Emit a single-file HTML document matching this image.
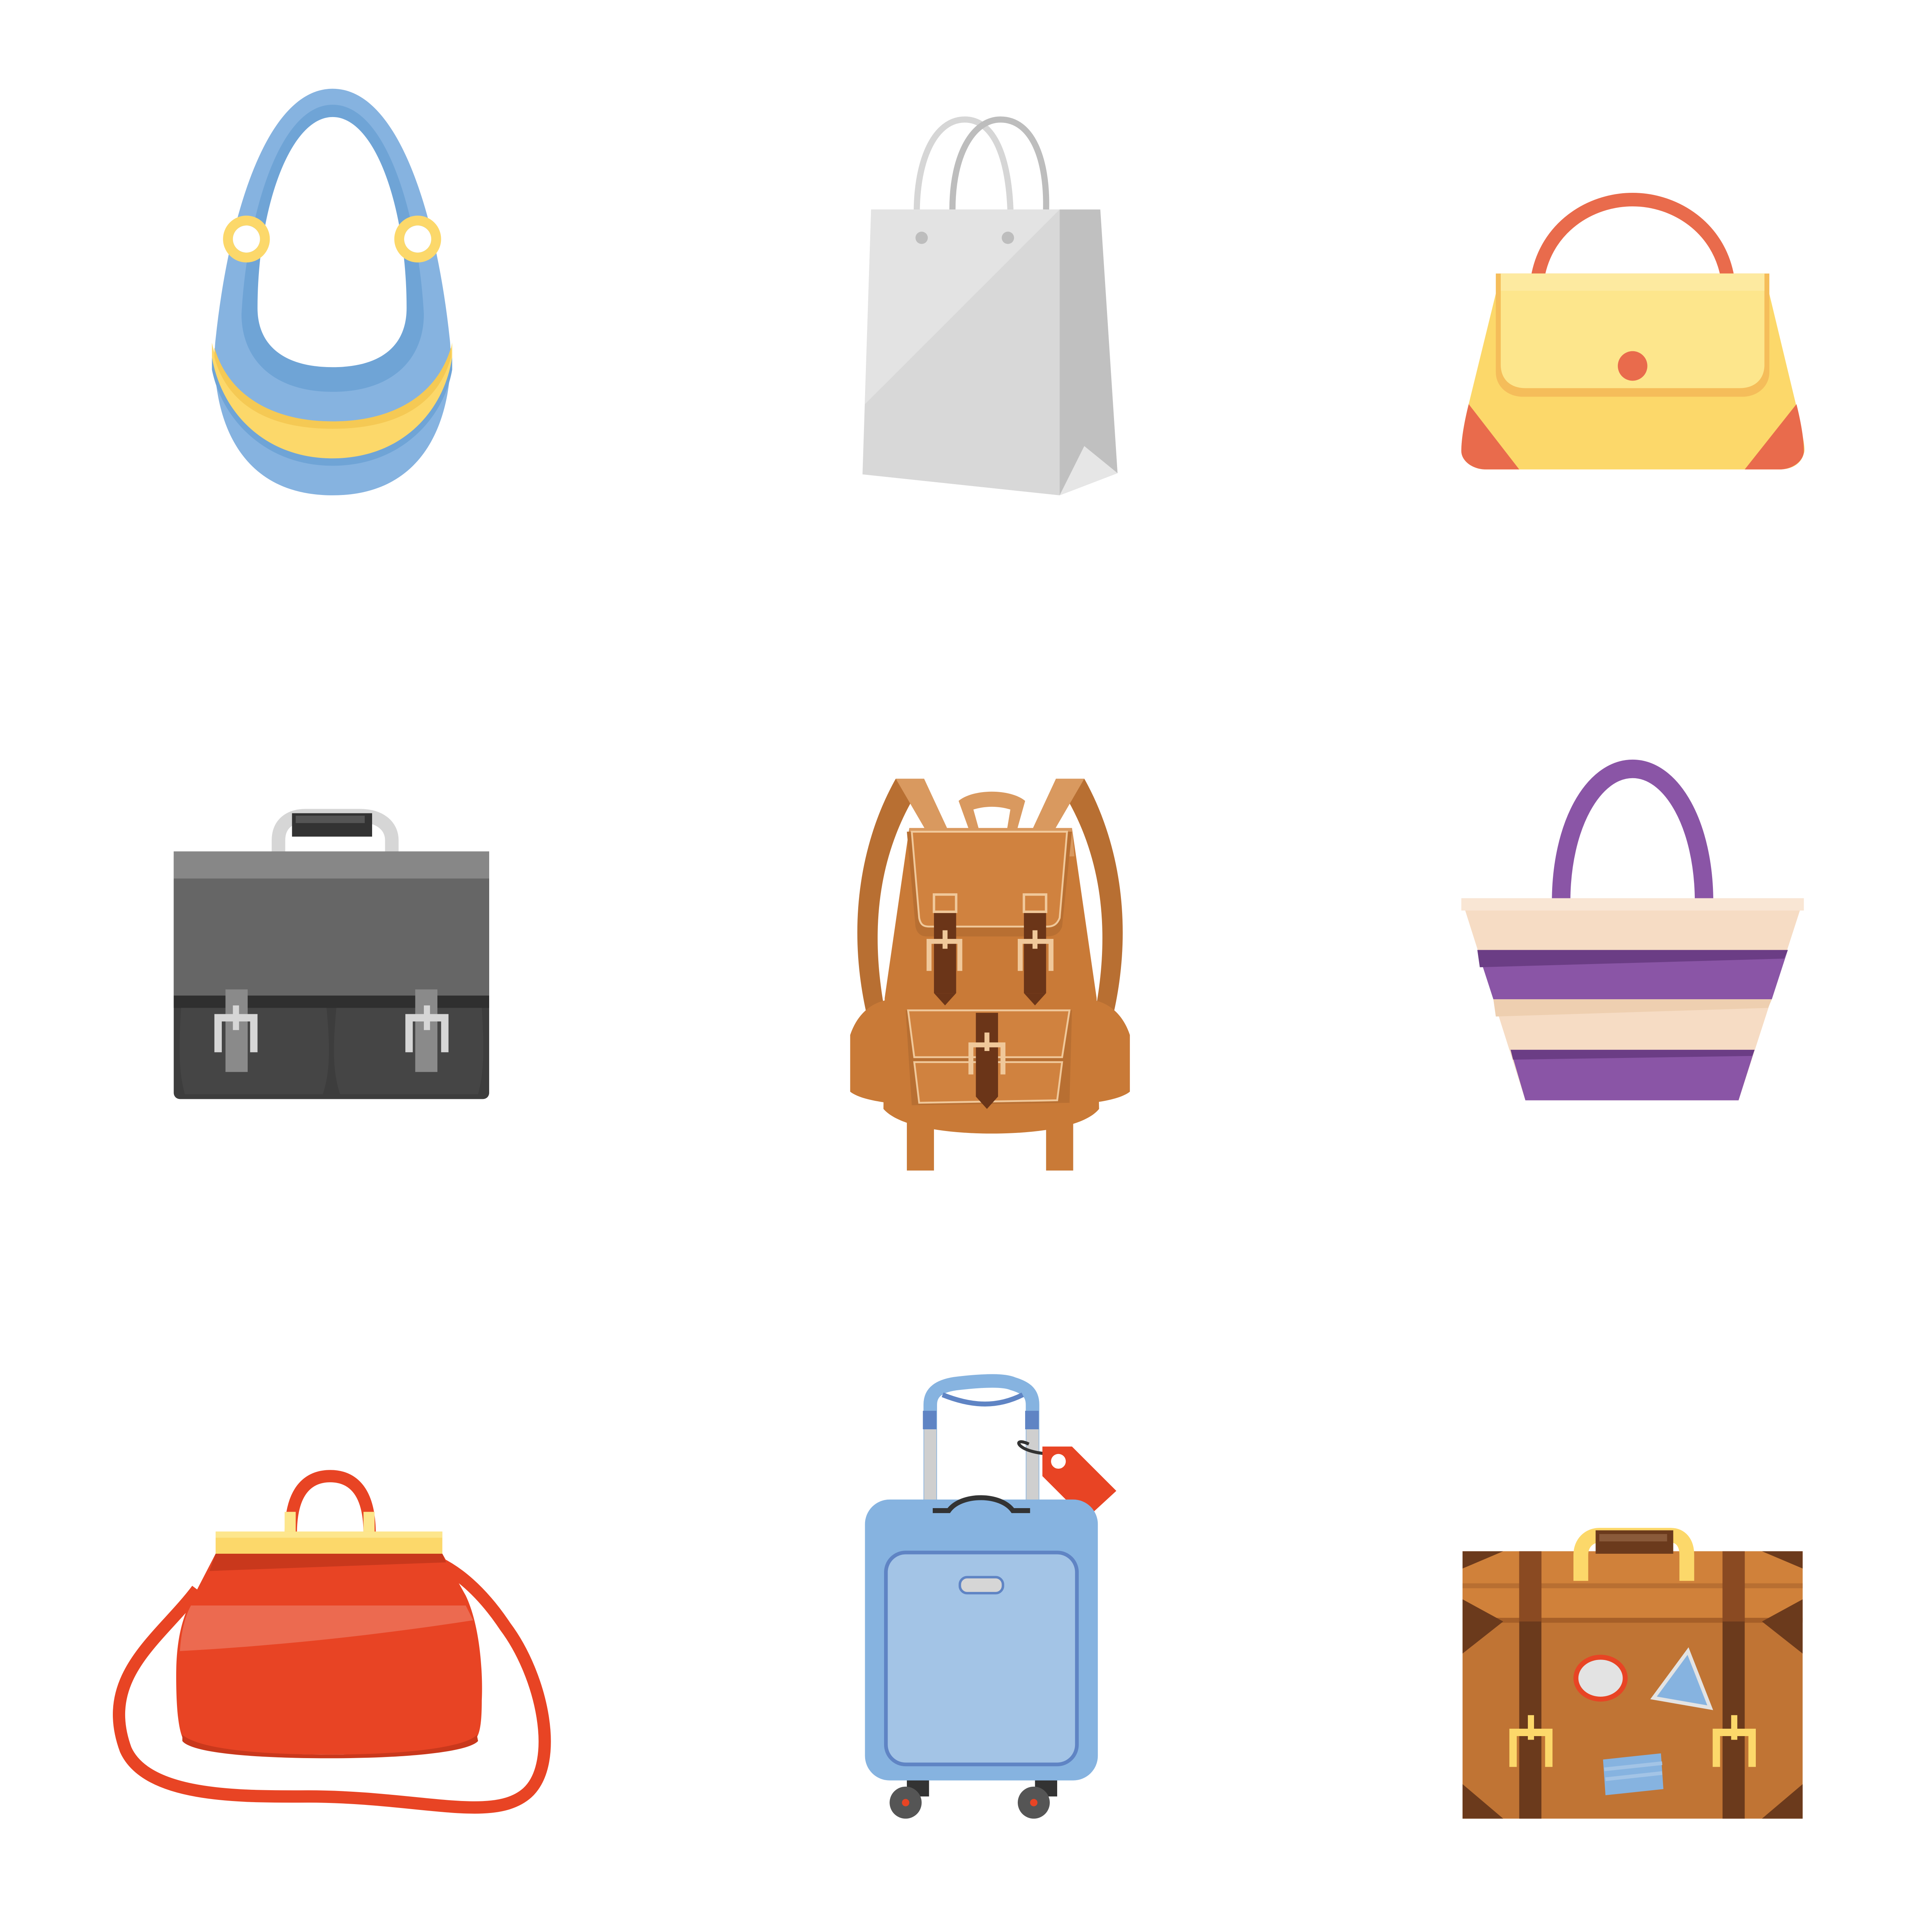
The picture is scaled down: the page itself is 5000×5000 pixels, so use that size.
<!DOCTYPE html>
<html><head><meta charset="utf-8"><style>html,body{margin:0;padding:0;background:#fff}svg{display:block}</style></head>
<body>
<svg width="5000" height="5000" viewBox="0 0 1568 1568" xmlns="http://www.w3.org/2000/svg">
<rect width="1568" height="1568" fill="#fff"/>

<!-- 1 blue hobo bag -->
<path d="M175,275 C185,180 215,72 270,72 C325,72 355,180 365,275 C368,300 367,402 270,402 C172,402 172,300 175,275 Z" fill="#86b3e0"/>
<path d="M172,300 C180,340 215,378 270,378 C325,378 360,340 367,300 L367,290 C360,330 325,372 270,372 C215,372 180,330 172,290 Z" fill="#6fa4d6"/>
<path d="M172,278 C180,320 215,342 270,342 C325,342 360,320 367,278 L367,290 C360,335 325,372 270,372 C215,372 180,335 172,290 Z" fill="#fcd86a"/>
<path d="M174,282 C185,320 220,342 270,342 C320,342 355,320 366,282 L366,290 C355,330 320,348 270,348 C220,348 185,330 174,290Z" fill="#f5c954"/>
<path d="M196,255 C200,180 225,85 270,85 C315,85 340,180 344,255 C344,290 320,318 270,318 C220,318 196,290 196,255Z" fill="#6fa4d6"/>
<path d="M209,250 C209,170 235,95 270,95 C305,95 330,170 330,250 C330,280 310,298 270,298 C230,298 209,280 209,250Z" fill="#fff"/>
<circle cx="200" cy="194" r="15" fill="#86b3e0" stroke="#fcd86a" stroke-width="8"/>
<circle cx="339" cy="194" r="15" fill="#86b3e0" stroke="#fcd86a" stroke-width="8"/>
<circle cx="200" cy="194" r="11" fill="#fff"/>
<circle cx="339" cy="194" r="11" fill="#fff"/>

<!-- 2 shopping bag -->
<path d="M745,192 C740,140 755,97 783,97 C811,97 822,140 820,192" fill="none" stroke="#d6d6d6" stroke-width="5"/>
<path d="M773,170 C773,125 790,97 812,97 C838,97 850,130 849,170" fill="none" stroke="#bdbdbd" stroke-width="5"/>
<polygon points="707,170 860,170 860,402 700,385" fill="#d8d8d8"/>
<polygon points="707,170 860,170 702,328" fill="#e3e3e3"/>
<polygon points="860,170 893,170 907,384 860,402" fill="#c0c0c0"/>
<polygon points="880,362 907,384 860,402" fill="#e6e6e6"/>
<circle cx="748" cy="193" r="5" fill="#bdbdbd"/><circle cx="818" cy="193" r="5" fill="#bdbdbd"/>

<!-- 3 yellow purse -->
<path d="M1248,225 C1255,185 1290,162 1325,162 C1360,162 1395,185 1402,225" fill="none" stroke="#e96b4c" stroke-width="11"/>
<path d="M1218,222 L1432,222 L1458,330 C1462,350 1466,364 1464,368 C1462,376 1455,381 1444,381 L1206,381 C1195,381 1186,374 1186,366 C1186,355 1189,340 1192,328 Z" fill="#fcd86a"/>
<path d="M1192,328 L1233,381 L1206,381 C1195,381 1186,374 1186,366 C1186,355 1189,340 1192,328 Z" fill="#e96b4c"/>
<path d="M1458,328 L1416,381 L1444,381 C1455,381 1464,374 1464,366 C1464,355 1461,340 1458,328 Z" fill="#e96b4c"/>
<path d="M1214,222 L1436,222 L1436,302 C1436,314 1426,322 1414,322 L1236,322 C1224,322 1214,314 1214,302 Z" fill="#f5bd5a"/>
<path d="M1218,222 L1432,222 L1432,296 C1432,308 1424,315 1412,315 L1238,315 C1226,315 1218,308 1218,296 Z" fill="#fde68c"/>
<rect x="1218" y="222" width="214" height="14" fill="#fdeaa0"/>
<circle cx="1325" cy="297" r="12" fill="#e96b4c"/>

<!-- 4 briefcase -->
<path d="M226,700 L226,682 C226,668 236,662 248,662 L292,662 C308,662 318,670 318,682 L318,700" fill="none" stroke="#d6d6d6" stroke-width="11"/>
<rect x="237" y="660" width="65" height="19" fill="#333"/><rect x="240" y="662" width="56" height="6" fill="#555"/>
<rect x="141" y="691" width="256" height="201" rx="5" fill="#3d3d3d"/>
<rect x="141" y="691" width="256" height="120" fill="#666"/>
<rect x="141" y="691" width="256" height="22" fill="#878787"/>
<rect x="141" y="808" width="256" height="10" fill="#2f2f2f"/>
<path d="M147,818 L265,818 C268,850 268,870 262,888 L150,888 C145,870 145,850 147,818Z" fill="#454545"/>
<path d="M273,818 L391,818 C393,850 393,870 388,888 L276,888 C270,870 270,850 273,818Z" fill="#454545"/>
<rect x="183" y="803" width="18" height="67" fill="#8a8a8a"/><rect x="337" y="803" width="18" height="67" fill="#8a8a8a"/>
<path d="M177,854 L177,826 L206,826 L206,854" fill="none" stroke="#d6d6d6" stroke-width="6"/>
<path d="M332,854 L332,826 L361,826 L361,854" fill="none" stroke="#d6d6d6" stroke-width="6"/>
<rect x="189" y="816" width="5" height="20" fill="#d6d6d6"/><rect x="344" y="816" width="5" height="20" fill="#d6d6d6"/>

<!-- 5 backpack -->
<path d="M727,632 C700,680 685,750 705,830 L720,830 C705,760 712,700 740,650Z" fill="#b86f32"/>
<path d="M880,632 C907,680 922,750 902,830 L887,830 C902,760 895,700 867,650Z" fill="#b86f32"/>
<rect x="736" y="910" width="22" height="40" fill="#c97a37"/><rect x="849" y="910" width="22" height="40" fill="#c97a37"/>
<path d="M778,650 C790,640 820,640 832,650 L825,675 L817,675 L820,657 C810,654 800,654 790,657 L795,675 L787,675Z" fill="#d9995f"/>
<path d="M738,672 L870,672 L890,810 L892,900 C880,915 840,920 805,920 C770,920 730,915 717,900 L718,810 Z" fill="#c97a37"/>
<path d="M738,672 L870,672 L872,695 L738,697Z" fill="#d9995f"/>
<path d="M727,632 L750,632 L770,675 L752,675Z M880,632 L857,632 L837,675 L855,675Z" fill="#d9995f"/>
<path d="M736,675 L870,675 L862,752 C860,758 855,760 850,760 L752,760 C747,760 744,757 743,752Z" fill="#b86f32"/>
<path d="M740,675 L866,675 L860,745 C858,750 855,752 850,752 L754,752 C749,752 747,750 746,745Z" fill="#d0823f" stroke="#f0c89a" stroke-width="1.5"/>
<path d="M735,820 L870,820 L868,895 L740,897Z" fill="#b86f32"/>
<path d="M737,820 L868,820 L862,858 L742,858Z" fill="#d0823f" stroke="#f0c89a" stroke-width="1.5"/>
<path d="M742,862 L862,862 L858,893 L746,895Z" fill="#d0823f" stroke="#f0c89a" stroke-width="1.5"/>
<path d="M690,840 C695,825 705,815 718,812 L720,895 C705,893 695,890 690,886Z" fill="#c97a37"/>
<path d="M917,840 C912,825 902,815 889,812 L887,895 C902,893 912,890 917,886Z" fill="#c97a37"/>
<rect x="758" y="741" width="18" height="65" fill="#6b3518"/><polygon points="758,806 776,806 767,816" fill="#6b3518"/>
<rect x="831" y="741" width="18" height="65" fill="#6b3518"/><polygon points="831,806 849,806 840,816" fill="#6b3518"/>
<rect x="792" y="822" width="18" height="68" fill="#6b3518"/><polygon points="792,890 810,890 801,900" fill="#6b3518"/>
<rect x="758" y="726" width="18" height="14" fill="none" stroke="#f0c89a" stroke-width="2"/>
<rect x="831" y="726" width="18" height="14" fill="none" stroke="#f0c89a" stroke-width="2"/>
<path d="M754,788 L754,764 L779,764 L779,788 M828,788 L828,764 L853,764 L853,788 M788,872 L788,848 L814,848 L814,872" fill="none" stroke="#f0c89a" stroke-width="4"/>
<rect x="765" y="755" width="4" height="15" fill="#f0c89a"/><rect x="838" y="755" width="4" height="15" fill="#f0c89a"/><rect x="799" y="838" width="4" height="15" fill="#f0c89a"/>

<!-- 6 purple tote -->
<path d="M1267,732 C1267,670 1293,624 1325,624 C1357,624 1383,670 1383,732" fill="none" stroke="#8a55a6" stroke-width="15"/>
<polygon points="1186,729 1464,729 1411,893 1238,893" fill="#f6dcc4"/>
<rect x="1186" y="729" width="278" height="10" fill="#f9e6d4"/>
<polygon points="1199,771 1451,771 1438,811 1212,811" fill="#8a55a6"/>
<polygon points="1199,771 1451,771 1448,778 1201,785" fill="#6b3d85"/>
<polygon points="1212,811 1438,811 1435,818 1214,825" fill="#eecfb0"/>
<polygon points="1226,852 1424,852 1411,893 1238,893" fill="#8a55a6"/>
<polygon points="1226,852 1424,852 1422,857 1228,860" fill="#6b3d85"/>

<!-- 7 red bag -->
<path d="M160,1290 C130,1330 80,1360 102,1420 C120,1460 200,1458 250,1458 C340,1458 400,1480 428,1455 C455,1430 440,1360 410,1320 C390,1290 370,1275 355,1268" fill="none" stroke="#e84424" stroke-width="10"/>
<path d="M236,1245 C236,1210 250,1198 268,1198 C286,1198 300,1210 300,1245" fill="none" stroke="#e84424" stroke-width="10"/>
<rect x="231" y="1227" width="9" height="18" fill="#fde68c"/><rect x="295" y="1227" width="9" height="18" fill="#fde68c"/>
<rect x="175" y="1243" width="184" height="18" fill="#fcd86a"/><rect x="175" y="1243" width="184" height="5" fill="#fde68c"/>
<path d="M175,1261 L359,1261 L378,1295 C390,1320 392,1360 391,1380 C391,1395 390,1405 387,1410 C380,1420 330,1424 268,1424 C200,1424 155,1420 148,1410 C144,1400 143,1380 143,1360 C143,1330 148,1310 160,1290 Z" fill="#e84424"/>
<path d="M175,1261 L359,1261 L362,1268 L170,1275Z" fill="#c9381c"/>
<path d="M155,1303 L378,1303 L384,1315 C300,1328 220,1336 146,1340 C147,1325 150,1312 155,1303Z" fill="#ec6a50"/>
<path d="M148,1408 C160,1418 200,1424 268,1424 C330,1424 378,1418 387,1408 L388,1413 C380,1422 330,1427 268,1427 C200,1427 155,1422 148,1413Z" fill="#c9381c"/>

<!-- 8 blue trolley -->
<path d="M755,1225 L755,1140 C755,1130 762,1125 775,1123 C800,1120 815,1120 822,1123 C832,1126 838,1130 838,1140 L838,1225" fill="none" stroke="#86b3e0" stroke-width="11"/>
<rect x="750" y="1160" width="10" height="65" fill="#cfcfcf"/><rect x="833" y="1160" width="10" height="65" fill="#cfcfcf"/>
<rect x="749" y="1145" width="11" height="15" fill="#5f84c4"/><rect x="832" y="1145" width="11" height="15" fill="#5f84c4"/>
<path d="M765,1132 C790,1142 810,1142 830,1132" fill="none" stroke="#5f84c4" stroke-width="4"/>
<path d="M835,1172 C820,1165 825,1180 855,1180" fill="none" stroke="#333" stroke-width="2.5"/>
<polygon points="846,1174 870,1174 906,1210 881,1233 846,1198" fill="#e84424"/>
<circle cx="859" cy="1186" r="6" fill="#fff"/>
<rect x="736" y="1440" width="18" height="18" fill="#333"/><rect x="840" y="1440" width="18" height="18" fill="#333"/>
<circle cx="735" cy="1463" r="13" fill="#555"/><circle cx="735" cy="1463" r="3" fill="#e84424"/>
<circle cx="839" cy="1463" r="13" fill="#555"/><circle cx="839" cy="1463" r="3" fill="#e84424"/>
<rect x="702" y="1217" width="189" height="228" rx="20" fill="#86b3e0"/>
<path d="M757,1226 L770,1226 C780,1212 812,1212 822,1226 L836,1226" fill="none" stroke="#333" stroke-width="4"/>
<rect x="719" y="1260" width="155" height="172" rx="16" fill="#a3c4e6" stroke="#5f84c4" stroke-width="3"/>
<rect x="779" y="1280" width="35" height="13" rx="6" fill="#d6d6d6" stroke="#5f84c4" stroke-width="2"/>

<!-- 9 brown suitcase -->
<rect x="1187" y="1259" width="276" height="217" fill="#c07434"/>
<rect x="1187" y="1259" width="276" height="57" fill="#d0813a"/>
<rect x="1187" y="1285" width="276" height="4" fill="#b86f32"/>
<rect x="1187" y="1313" width="276" height="4" fill="#a65f28"/>
<polygon points="1187,1259 1220,1259 1187,1273" fill="#6b3a1c"/><polygon points="1463,1259 1430,1259 1463,1273" fill="#6b3a1c"/>
<polygon points="1187,1298 1220,1316 1187,1342" fill="#6b3a1c"/><polygon points="1463,1298 1430,1316 1463,1342" fill="#6b3a1c"/>
<polygon points="1187,1448 1220,1476 1187,1476" fill="#6b3a1c"/><polygon points="1463,1448 1430,1476 1463,1476" fill="#6b3a1c"/>
<rect x="1233" y="1259" width="18" height="217" fill="#6b3a1c"/><rect x="1398" y="1259" width="18" height="217" fill="#6b3a1c"/>
<rect x="1233" y="1259" width="18" height="57" fill="#8a4a22"/><rect x="1398" y="1259" width="18" height="57" fill="#8a4a22"/>
<path d="M1283,1283 L1283,1262 C1283,1252 1290,1246 1298,1246 L1356,1246 C1364,1246 1369,1252 1369,1262 L1369,1283" fill="none" stroke="#fcd86a" stroke-width="12"/>
<rect x="1295" y="1242" width="63" height="19" fill="#6b3a1c"/><rect x="1298" y="1245" width="55" height="6" fill="#8a5a3a"/>
<path d="M1228,1434 L1228,1406 L1257,1406 L1257,1434 M1393,1434 L1393,1406 L1422,1406 L1422,1434" fill="none" stroke="#fcd86a" stroke-width="6"/>
<rect x="1240" y="1392" width="5" height="20" fill="#fcd86a"/><rect x="1405" y="1392" width="5" height="20" fill="#fcd86a"/>
<ellipse cx="1299" cy="1362" rx="20" ry="17" fill="#e3e3e3" stroke="#e84424" stroke-width="4"/>
<polygon points="1370,1340 1388,1386 1342,1378" fill="#86b3e0" stroke="#e3e3e3" stroke-width="3"/>
<polygon points="1301,1428 1348,1423 1350,1452 1303,1457" fill="#86b3e0"/>
<path d="M1302,1436 L1349,1431 M1303,1444 L1349,1439" stroke="#a3c4e6" stroke-width="3"/>
</svg>
</body></html>
